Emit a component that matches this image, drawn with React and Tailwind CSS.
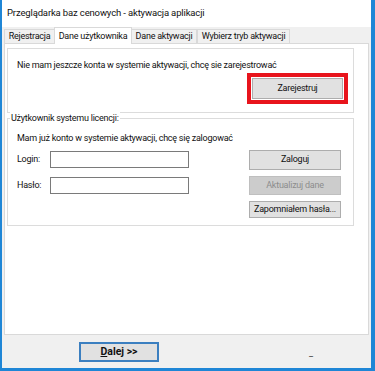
import React from 'react';

const font = { fontFamily: 'Roboto, "Noto Sans", sans-serif' };

// przycisk w stylu Windows Forms
const WinButton = ({ children, className = '', disabled = false }) => (
  <div
    className={`flex items-center justify-center border text-[9px] tracking-[-0.24px] whitespace-nowrap ${
      disabled
        ? 'bg-[#cccccc] border-[#bfbfbf] text-[#8c8c8c]'
        : 'bg-[#e1e1e1] border-[#adadad] text-[#111]'
    } ${className}`}
  >
    {children}
  </div>
);

const Tab = ({ label, active, w }) => (
  <div
    className={`flex items-center justify-center border border-b-0 ${w} ${
      active
        ? 'bg-white border-[#d9d9d9] h-[17px] -mb-px -mx-[1px] relative z-10'
        : 'bg-[#f0f0f0] border-[#d9d9d9] h-[14px]'
    }`}
  >
    <span className="text-[9px] tracking-[-0.24px] leading-none text-[#111] whitespace-nowrap">{label}</span>
  </div>
);

export default function App() {
  return (
    <div
      style={font}
      className="w-[375px] h-[371px] bg-[#1f86d6] pl-[2px] pr-[4px] pb-[3px] flex flex-col"
    >
      {/* PASEK TYTUŁU */}
      <div className="h-[27px] bg-white flex items-center pl-[5px] shrink-0">
        <span className="text-[9.5px] tracking-[-0.15px] text-[#111]">Przeglądarka baz cenowych - aktywacja aplikacji</span>
      </div>

      <div className="flex-1 bg-[#f0f0f0] flex flex-col">
        {/* ZAKŁADKI */}
        <div className="flex items-end pl-[2px] h-[16px]">
          <Tab label="Rejestracja" w="w-[51px]" />
          <Tab label="Dane użytkownika" w="w-[78px]" active />
          <Tab label="Dane aktywacji" w="w-[66px]" />
          <Tab label="Wybierz tryb aktywacji" w="w-[93px]" />
        </div>

        {/* STRONA ZAKŁADKI */}
        <div className="mx-[2px] h-[292px] bg-white border border-[#d9d9d9] pt-[4px] pl-[2px] pr-[14px] text-[9px] tracking-[-0.24px] text-[#111]">
          {/* REJESTRACJA */}
          <div className="h-[65px] border border-[#dcdcdc] relative">
            <div className="pl-[9px] pt-[9px] leading-[14px]">
              Nie mam jeszcze konta w systemie aktywacji, chcę sie zarejestrować
            </div>
            <div className="absolute left-[239px] top-[24px] w-[101px] h-[31px] border-[4px] border-[#e8141c] p-[1px]">
              <WinButton className="w-full h-full">Zarejestruj</WinButton>
            </div>
          </div>

          {/* UŻYTKOWNIK */}
          <div className="mt-[5px] h-[108px] border border-[#dcdcdc] relative">
            <span className="absolute -top-[8px] left-[2px] bg-white px-[1px] leading-[14px]">
              Użytkownik systemu licencji:
            </span>
            <div className="pl-[9px] pt-[12px] leading-[14px]">
              Mam już konto w systemie aktywacji, chcę się zalogować
            </div>
            <div className="flex mt-[5px]">
              <div className="flex flex-col gap-[9px] pt-[1px] pl-[9px] w-[241px]">
                <div className="flex items-center h-[17px]">
                  <span className="w-[33px]">Login:</span>
                  <div className="w-[139px] h-[17px] border border-[#7a7a7a] bg-white" />
                </div>
                <div className="flex items-center h-[17px]">
                  <span className="w-[33px]">Hasło:</span>
                  <div className="w-[139px] h-[17px] border border-[#7a7a7a] bg-white" />
                </div>
              </div>
              <div className="flex flex-col gap-[6px]">
                <WinButton className="w-[92px] h-[20px]">Zaloguj</WinButton>
                <WinButton className="w-[92px] h-[19px]" disabled>Aktualizuj dane</WinButton>
                <WinButton className="w-[92px] h-[17px]">Zapomniałem hasła...</WinButton>
              </div>
            </div>
          </div>
        </div>

        {/* STOPKA */}
        <div className="flex-1 flex items-center relative">
          <div className="ml-[77px] w-[80px] h-[20px] border-2 border-[#3b7fc0] bg-[#e1e1e1] flex items-center justify-center">
            <span className="text-[10.5px] font-bold text-[#111]">
              <span className="underline">D</span>alej &gt;&gt;
            </span>
          </div>
          <span className="absolute left-[307px] top-[12px] text-[9px] text-[#333]">_</span>
        </div>
      </div>
    </div>
  );
}
